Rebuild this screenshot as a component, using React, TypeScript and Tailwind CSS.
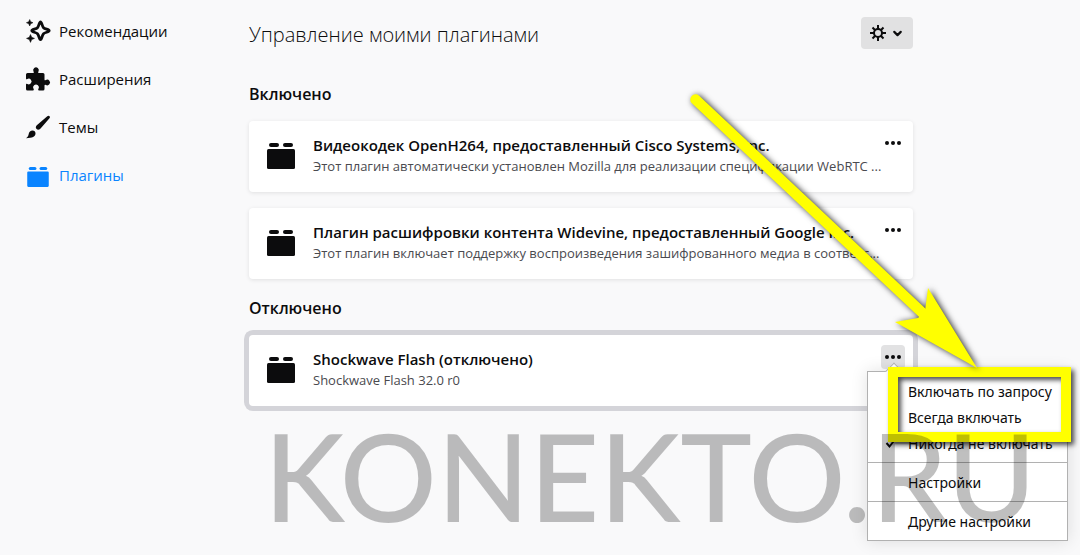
import { ChevronDown } from "lucide-react"

const linkClass = "flex h-12 items-center gap-[7px] pl-6 text-[15px]"

const SparkIcon = () => (
    <svg className="size-7" viewBox="0 0 28 28">
        <path d="M16.500 4.800c1.300 0 1.500 4.400 3 5.900s5.700 1.600 5.700 3-4.200 1.500-5.700 3-1.700 5.900-3 5.900-1.500-4.400-3-5.900-5.700-1.600-5.700-3 4.200-1.500 5.700-3 1.700-5.900 3-5.900z" fill="none" stroke="#0c0c0d" strokeWidth="2.800" strokeLinejoin="round" />
        <path d="M5.700 2.500l1 2.200 2.300 1-2.300 1-1 2.300-1-2.300-2.300-1 2.300-1z M6.500 17.500l1.200 2.700 2.800 1.200-2.800 1.200-1.200 2.800-1.200-2.800-2.800-1.200 2.800-1.200z" fill="#0c0c0d" stroke="#0c0c0d" strokeWidth="0.500" />
    </svg>
)

const PuzzleIcon = () => (
    <svg className="size-7" viewBox="0 0 28 28" fill="#0c0c0d">
        <path d="M3.500 8h5.500c1 0 1-.7.600-1.300a2.800 2.800 0 1 1 4.800 0c-.4.600-.4 1.300.6 1.300h4a1.500 1.500 0 0 1 1.500 1.500v5c0 1 .7 1 1.300.6a2.800 2.800 0 1 1 0 4.800c-.6-.4-1.300-.4-1.300.6v3.500a1.500 1.500 0 0 1-1.500 1.500h-4c-1 0-1-.8-.6-1.400a2.900 2.900 0 1 0-4.800 0c.4.600.4 1.400-.6 1.400h-5.500a1.500 1.500 0 0 1-1.500-1.500v-4.500c0-1 .7-1 1.300-.6a2.800 2.800 0 1 0 0-4.800c-.6.4-1.300.4-1.300-.6v-4a1.500 1.500 0 0 1 1.500-1.500z" />
    </svg>
)

const BrushIcon = () => (
    <svg className="size-7" viewBox="0 0 28 28" fill="#0c0c0d">
        <path d="M24.500 2.800a1.500 1.500 0 0 1 1.200 2.300l-8.700 10a4 4 0 0 1-2.800 1.700c-1 0-2.400-1.300-2.400-2.300a3.500 3.500 0 0 1 1-2.300l10.500-9a2 2 0 0 1 1.200-.4zM8.500 17.500c1.800 0 3 1.200 3 2.800 0 3.300-3 4.900-9.500 4.900 2-1.200 2.300-2.300 2.700-4.100.4-2.200 1.800-3.600 3.800-3.600z" />
    </svg>
)

const PluginIcon = ({ className }: { className: string }) => (
    <svg className={className} viewBox="0 0 28 26" fill="currentColor">
        <rect x="2" y="0" width="10" height="4" rx="2" />
        <rect x="16" y="0" width="10" height="4" rx="2" />
        <rect x="0" y="6" width="28" height="20" rx="1.500" />
    </svg>
)

const GearIcon = () => (
    <svg className="size-4" viewBox="0 0 16 16" fill="none" stroke="#0c0c0d" strokeWidth="2">
        <circle cx="8" cy="8" r="4" />
        <path d="M8 0v4M8 12v4M0 8h4M12 8h4M2.500 2.500l2.700 2.700M10.800 10.800l2.700 2.700M13.500 2.500l-2.700 2.700M5.200 10.800l-2.700 2.700" />
    </svg>
)

const enabled = [
    {
        name: "Видеокодек OpenH264, предоставленный Cisco Systems, Inc.",
        text: "Этот плагин автоматически установлен Mozilla для реализации спецификации WebRTC ...",
    },
    {
        name: "Плагин расшифровки контента Widevine, предоставленный Google Inc.",
        text: "Этот плагин включает поддержку воспроизведения зашифрованного медиа в соответс...",
    },
]

const menuGroups = [
    ["Включать по запросу", "Всегда включать", "Никогда не включать"],
    ["Настройки"],
    ["Другие настройки"],
]

const Menu = () => (
    <div className="absolute -left-[14px] top-[26px] z-10 w-[201px] border border-[#b1b1b1] bg-white font-['Noto_Sans'] text-[14px] text-[#0c0c0d] shadow-[0_0_16px_rgba(0,0,0,0.12)]">
        <span className="absolute -top-[7px] left-5 size-3 rotate-45 border-l border-t border-[#b1b1b1] bg-white" />
        {menuGroups.map((group) => (
            <div key={group[0]} className="relative border-t border-[#b1b1b1] bg-white pb-[5px] pt-[7px] first-of-type:border-t-0">
                {group.map((item) => (
                    <button key={item} className="flex h-[26px] w-full items-center whitespace-nowrap pb-[2px] pl-10 text-left">
                        {item === "Никогда не включать" && (
                            <svg className="absolute left-[17px] size-3" viewBox="0 0 12 12" fill="none" stroke="#0c0c0d" strokeWidth="2">
                                <path d="M1.500 6l3 3.500 6-7.500" />
                            </svg>
                        )}
                        {item}
                    </button>
                ))}
            </div>
        ))}
        <div className="absolute -top-[5px] left-5 h-[75px] w-[183px] border-[10px] border-[#ff0] shadow-[3px_3px_5px_rgba(0,0,0,0.7),inset_3px_3px_5px_rgba(0,0,0,0.7)]" />
        <svg className="pointer-events-none absolute -top-[281px] -left-[188px] h-[282px] w-[310px] max-w-none overflow-visible" viewBox="0 0 310 282">
            <g className="[filter:drop-shadow(2px_1px_3px_rgba(0,0,0,0.8))]">
                <path d="M15.500 8.500L250 229" stroke="#ff0" strokeWidth="10.500" strokeLinecap="round" />
                <path d="M297 277L215 231L238 227L245 220L248 197Z" fill="#ff0" />
            </g>
        </svg>
    </div>
)

type CardProps = { name: string; text: string; open?: boolean }

const Card = ({ name, text, open }: CardProps) => (
    <article className={open ? "flex h-[71px] rounded bg-white pl-[18px] pr-2 pt-[10px] ring-[5px] ring-[#d4d4d9]" : "flex h-[71px] rounded bg-white pl-[18px] pr-2 pt-[10px] shadow-[0_1px_4px_rgba(12,12,13,0.1)]"}>
        <PluginIcon className="mt-3 h-[26px] w-7 shrink-0" />
        <div className="ml-[18px] min-w-0 flex-1">
            <h3 className="truncate pt-[2px] text-[15px] font-semibold leading-[25px]">{name}</h3>
            <p className="whitespace-nowrap text-[13px] leading-4 text-[#4a4a4f]">{text}</p>
        </div>
        <div className="relative h-6">
            <button aria-label="Действия" className={open ? "flex size-6 items-center justify-center rounded-sm bg-[#e2e2e3]" : "flex size-6 items-center justify-center"}>
                <svg className="size-4" viewBox="0 0 16 16" fill="#0c0c0d">
                    <circle cx="2" cy="8" r="2" />
                    <circle cx="8" cy="8" r="2" />
                    <circle cx="14" cy="8" r="2" />
                </svg>
            </button>
            {open && <Menu />}
        </div>
    </article>
)

const App = () => {
    return (
        <div className="relative flex min-h-screen overflow-hidden bg-[#f9f9fa] font-['Open_Sans','Noto_Sans',sans-serif] text-[#0c0c0d]">
            <nav className="w-[249px] shrink-0 pt-[7px]">
                <a href="#" className={linkClass}><SparkIcon />Рекомендации</a>
                <a href="#" className={linkClass}><PuzzleIcon />Расширения</a>
                <a href="#" className={linkClass}><BrushIcon />Темы</a>
                <a href="#" className="flex h-12 items-center gap-[10px] pl-[27px] text-[15px] text-[#0a84ff]"><PluginIcon className="mt-[3px] h-5 w-[22px]" />Плагины</a>
            </nav>

            <main className="w-full max-w-[664px]">
                <header className="flex items-center justify-between pt-[17px]">
                    <h1 className="pt-[3px] text-[20px] font-light leading-7">Управление моими плагинами</h1>
                    <button aria-label="Инструменты" className="flex h-8 w-[52px] items-center justify-center gap-[5px] rounded-sm bg-[#e1e1e2]">
                        <GearIcon />
                        <ChevronDown size={13} strokeWidth={4} />
                    </button>
                </header>

                <h2 className="mb-[15px] mt-[33px] text-[16px] font-semibold leading-6">Включено</h2>
                <div className="flex flex-col gap-4">
                    {enabled.map((plugin) => (
                        <Card key={plugin.name} name={plugin.name} text={plugin.text} />
                    ))}
                </div>

                <h2 className="mb-[15px] mt-[17px] text-[16px] font-semibold leading-6">Отключено</h2>
                <Card name="Shockwave Flash (отключено)" text="Shockwave Flash 32.0 r0" open />
            </main>

            <div className="pointer-events-none absolute left-[264px] top-[416px] z-20 whitespace-nowrap font-['Lato'] text-[121px] font-medium leading-[120px] text-black/25">KONEKTO.RU</div>
        </div>
    )
}

export default App
